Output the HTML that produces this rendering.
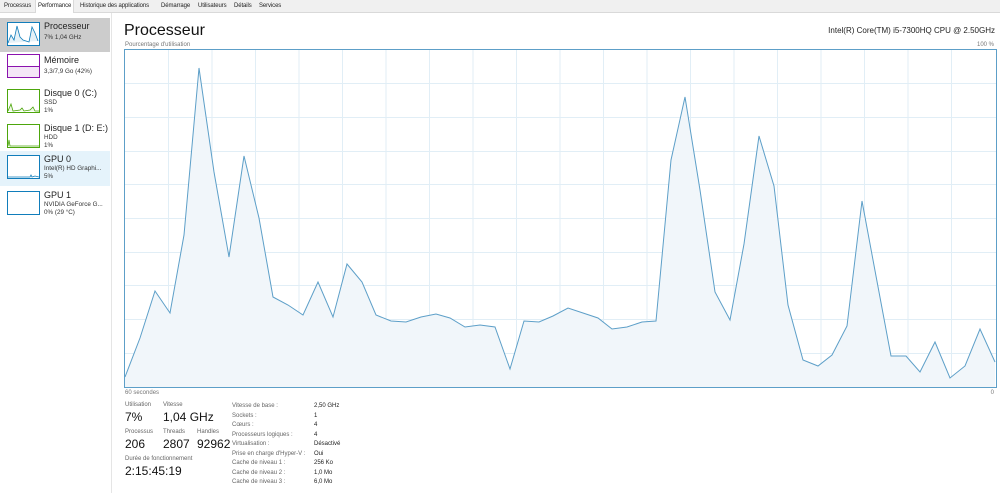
<!DOCTYPE html><html><head><style>
body{margin:0;width:1000px;height:493px;background:#fff;font-family:"Liberation Sans",sans-serif;position:relative;overflow:hidden;color:#000}
.a{position:absolute;white-space:nowrap}
.tabs{position:absolute;left:0;top:0;width:1000px;height:12px;border-bottom:1px solid #d9d9d9;background:#f0f0f0}
.tab{position:absolute;top:0;font-size:6px;line-height:12px;color:#222;letter-spacing:-0.1px}
.side{position:absolute;left:0;top:13px;width:111px;height:480px;border-right:1px solid #e5e5e5}
.it{position:absolute;left:0;width:110px;height:34px}
.th{position:absolute;left:7px;top:4px;width:31px;height:22px;border:1px solid}
.t1{position:absolute;left:44px;top:3px;font-size:9px;color:#222}
.t2{position:absolute;left:44px;font-size:6.3px;color:#333}
.g{font-size:6px;color:#777}
.l{font-size:6px;color:#666}
.v{font-size:12px;color:#111}
</style></head><body>
<div class="tabs">
<span class="tab" style="left:4px">Processus</span>
<span class="tab" style="left:35px;background:#fff;height:13px;padding:0 2px;border:1px solid #d9d9d9;border-bottom:none;top:-1px">Performance</span>
<span class="tab" style="left:80px">Historique des applications</span>
<span class="tab" style="left:161px">Démarrage</span>
<span class="tab" style="left:198px">Utilisateurs</span>
<span class="tab" style="left:234px">Détails</span>
<span class="tab" style="left:259px">Services</span>
</div>
<div class="side">
<div class="it" style="top:5px;background:#cccccc"><div class="th" style="border-color:#117dbb;background:#fff"><svg width="31" height="22"><polyline points="0,20 3,12 6,17 9,3 12,14 15,17 18,18 21,19 24,4 27,10 30,18" fill="#e6f1f7" stroke="#117dbb" stroke-width="0.8"/></svg></div><div class="t1">Processeur</div><div class="t2" style="top:16px">7% 1,04 GHz</div></div>
<div class="it" style="top:39px"><div class="th" style="border-color:#8b12ae;top:2px"><div style="position:absolute;left:0;right:0;top:11px;bottom:0;background:#f4e6f7;border-top:1px solid #8b12ae"></div></div><div class="t1">Mémoire</div><div class="t2" style="top:16px">3,3/7,9 Go (42%)</div></div>
<div class="it" style="top:72px"><div class="th" style="border-color:#4da60c"><svg width="31" height="22"><polyline points="0,21 3,14 5,21 12,20 14,18 16,21 22,20 25,17 27,21 31,21" fill="#eef7e6" stroke="#4da60c" stroke-width="0.8"/></svg></div><div class="t1">Disque 0 (C:)</div><div class="t2" style="top:14px">SSD</div><div class="t2" style="top:22px">1%</div></div>
<div class="it" style="top:107px"><div class="th" style="border-color:#4da60c"><svg width="31" height="22"><polyline points="0,21 1,15 2,21 31,21" fill="none" stroke="#4da60c" stroke-width="0.8"/></svg></div><div class="t1">Disque 1 (D: E:)</div><div class="t2" style="top:14px">HDD</div><div class="t2" style="top:22px">1%</div></div>
<div class="it" style="top:138px;background:#e5f3fb;height:35px"><div class="th" style="border-color:#117dbb;background:#fff"><svg width="31" height="22"><polyline points="0,21 22,21 23,19 24,21 27,20 31,21" fill="none" stroke="#117dbb" stroke-width="0.8"/></svg></div><div class="t1">GPU 0</div><div class="t2" style="top:14px">Intel(R) HD Graphi...</div><div class="t2" style="top:22px">5%</div></div>
<div class="it" style="top:174px"><div class="th" style="border-color:#117dbb"></div><div class="t1">GPU 1</div><div class="t2" style="top:14px">NVIDIA GeForce G...</div><div class="t2" style="top:22px">0% (29 °C)</div></div>
</div>
<div class="a" style="left:124px;top:22px;font-size:16px;color:#111">Processeur</div>
<div class="a" style="right:5px;top:26px;font-size:8px;color:#222">Intel(R) Core(TM) i5-7300HQ CPU @ 2.50GHz</div>
<div class="a g" style="left:125px;top:42px">Pourcentage d'utilisation</div>
<div class="a g" style="right:6px;top:42px">100 %</div>
<svg class="a" style="left:124px;top:49px" width="873" height="339">
<g stroke="#e1eef6" stroke-width="1">
<path d="M44.5,0V339M88,0V339M131.5,0V339M175,0V339M218.5,0V339M262,0V339M305.5,0V339M349,0V339M392.5,0V339M436,0V339M479.5,0V339M523,0V339M566.5,0V339M610,0V339M653.5,0V339M697,0V339M740.5,0V339M784,0V339M827.5,0V339"/>
<path d="M0,34.5H873M0,68.5H873M0,102.5H873M0,135.5H873M0,169.5H873M0,203.5H873M0,236.5H873M0,270.5H873M0,304.5H873"/>
</g>
<polygon fill="#f1f6fa" stroke="none" points="1,328 16,289 31,242 46,264 60,186 75,19 90,123 105,208 120,107 135,169 149,248 164,256 179,266 194,233 209,268 223,215 238,233 252,266 267,272 282,273 297,268 312,265 326,269 341,278 356,276 371,278 386,320 400,272 415,273 429,267 444,259 459,264 474,269 488,280 503,278 518,273 532,272 547,111 561,48 576,141 591,243 606,271 620,195 635,87 650,137 664,256 679,311 694,317 708,306 723,277 738,152 752,227 767,307 782,307 796,323 811,293 826,329 841,317 856,280 871,313 871,338 1,338"/>
<polyline fill="none" stroke="#5d9fc8" stroke-width="1" points="1,328 16,289 31,242 46,264 60,186 75,19 90,123 105,208 120,107 135,169 149,248 164,256 179,266 194,233 209,268 223,215 238,233 252,266 267,272 282,273 297,268 312,265 326,269 341,278 356,276 371,278 386,320 400,272 415,273 429,267 444,259 459,264 474,269 488,280 503,278 518,273 532,272 547,111 561,48 576,141 591,243 606,271 620,195 635,87 650,137 664,256 679,311 694,317 708,306 723,277 738,152 752,227 767,307 782,307 796,323 811,293 826,329 841,317 856,280 871,313"/>
<rect x="0.5" y="0.5" width="872" height="338" fill="none" stroke="#5d9fc8"/>
</svg>
<div class="a g" style="left:125px;top:390px">60 secondes</div>
<div class="a g" style="right:6px;top:390px">0</div>
<div class="a l" style="left:125px;top:402px">Utilisation</div><div class="a l" style="left:163px;top:402px">Vitesse</div>
<div class="a v" style="left:125px;top:410px">7%</div><div class="a v" style="left:163px;top:410px">1,04 GHz</div>
<div class="a l" style="left:125px;top:429px">Processus</div><div class="a l" style="left:163px;top:429px">Threads</div><div class="a l" style="left:197px;top:429px">Handles</div>
<div class="a v" style="left:125px;top:437px">206</div><div class="a v" style="left:163px;top:437px">2807</div><div class="a v" style="left:197px;top:437px">92962</div>
<div class="a l" style="left:125px;top:456px">Durée de fonctionnement</div>
<div class="a v" style="left:125px;top:464px">2:15:45:19</div>
<div class="a l" style="left:232px;top:402px;line-height:9.5px">Vitesse de base :<br>Sockets :<br>Cœurs :<br>Processeurs logiques :<br>Virtualisation :<br>Prise en charge d'Hyper-V :<br>Cache de niveau 1 :<br>Cache de niveau 2 :<br>Cache de niveau 3 :</div>
<div class="a" style="left:314px;top:402px;line-height:9.5px;font-size:6px;color:#222">2,50 GHz<br>1<br>4<br>4<br>Désactivé<br>Oui<br>256 Ko<br>1,0 Mo<br>6,0 Mo</div>
</body></html>
